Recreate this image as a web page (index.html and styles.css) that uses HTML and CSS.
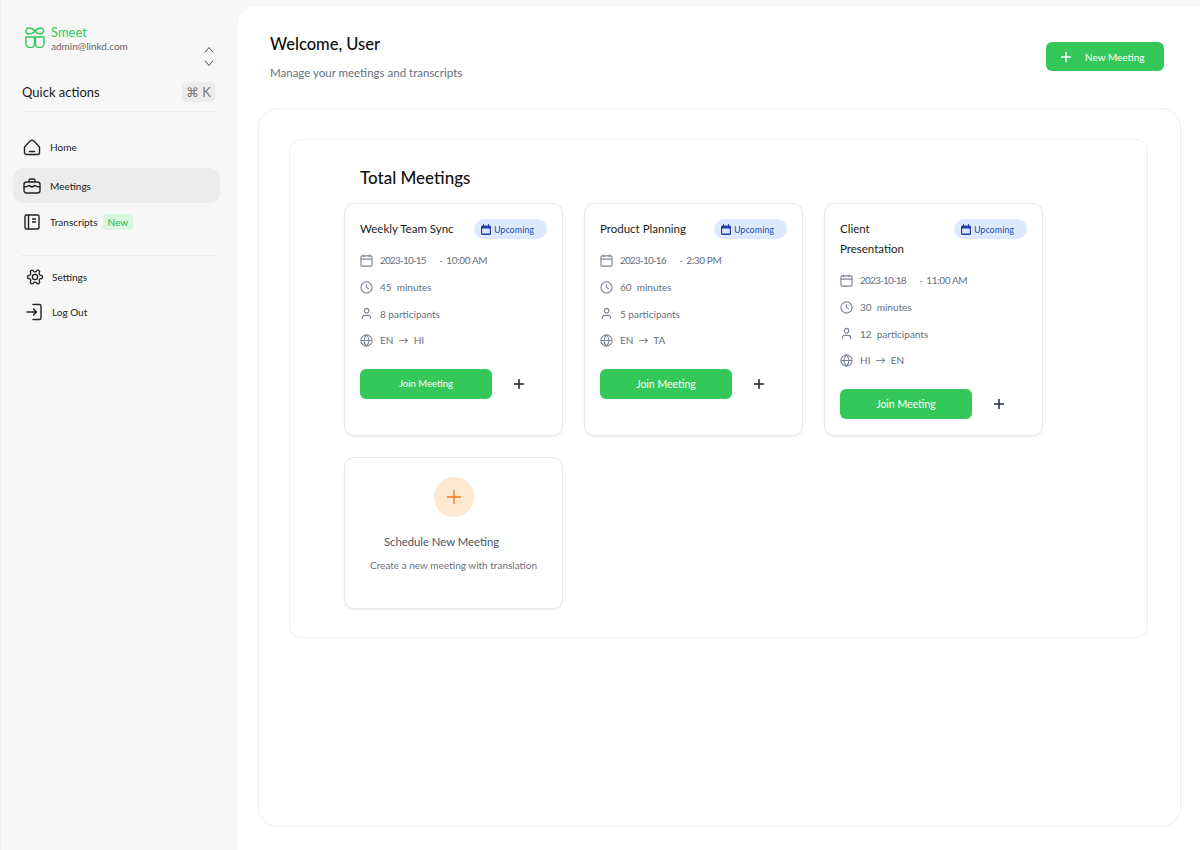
FILE: index.html
```html
<!DOCTYPE html>
<html lang="en">
  <head>
    <meta charset="UTF-8" />
    <title>Smeet - Meetings</title>
    <link rel="stylesheet" href="styles.css">
  </head>
  <body>
    <div class="app">
      <aside class="sidebar">
        <div class="account">
          <svg class="logo" width="20" height="21" viewBox="0 0 20 21" fill="none" stroke="#34c759" stroke-width="1.400" stroke-linejoin="round">
            <path d="M10 4C8 1.500 5.500 1 3.500 1 2 1 1 2.500 1 4s1 3 2.500 3C5.500 7 8 6.500 10 4z" />
            <path d="M10 4c2-2.500 4.500-3 6.500-3 1 .8 2 2 2.500 3-.5 1-1.500 2.200-2.500 3-2 0-4.500-.5-6.500-3z" />
            <path d="M1 10h8.500v6.500a4.250 4.250 0 0 1-8.500 0z" />
            <path d="M10.500 10H19v6.500a4.250 4.250 0 0 1-8.500 0z" />
          </svg>
          <div class="account_text">
            <div class="brand">Smeet</div>
            <div class="email">admin@linkd.com</div>
          </div>
          <div class="switcher">
            <svg width="10" height="6" viewBox="0 0 10 6" fill="none" stroke="#555" stroke-width="1"><path d="M1 5.500l4-5 4 5" /></svg>
            <svg width="10" height="6" viewBox="0 0 10 6" fill="none" stroke="#555" stroke-width="1"><path d="M1 .5l4 5 4-5" /></svg>
          </div>
        </div>

        <div class="quick">
          <span>Quick actions</span>
          <span class="kbd">⌘ K</span>
        </div>

        <nav class="nav">
          <a class="nav_item">
            <svg width="18" height="18" viewBox="0 0 18 18" fill="none" stroke="#222" stroke-width="1.400" stroke-linejoin="round" stroke-linecap="round"><path d="M1.500 9l5.500-6c1-1 3-1 4 0l5.500 6v5.500a2 2 0 0 1-2 2h-11a2 2 0 0 1-2-2z" /><path d="M6.500 13.500h5" /></svg>
            Home
          </a>
          <a class="nav_item active">
            <svg width="18" height="18" viewBox="0 0 18 18" fill="none" stroke="#222" stroke-width="1.400" stroke-linejoin="round"><rect x="1" y="5" width="16" height="11" rx="2.500" /><path d="M6 5V3.500A1.500 1.500 0 0 1 7.500 2h3A1.500 1.500 0 0 1 12 3.500V5" /><path d="M1 10c2 0 3.500-.5 5-1.500L9 10l3-1.500c1.500 1 3 1.500 5 1.500" /></svg>
            Meetings
          </a>
          <a class="nav_item nav_short">
            <svg width="18" height="18" viewBox="0 0 18 18" fill="none" stroke="#222" stroke-width="1.400" stroke-linejoin="round"><rect x="2" y="2" width="14" height="14" rx="1.500" /><path d="M5.500 2v14M9 6h4M9 9h4" /></svg>
            Transcripts
            <span class="new_tag">New</span>
          </a>
        </nav>

        <nav class="nav nav_bottom">
          <a class="nav_item">
            <svg width="18" height="18" viewBox="0 0 24 24" fill="none" stroke="#222" stroke-width="1.800" stroke-linejoin="round"><g transform="rotate(90 12 12)"><path d="M12.220 2h-.44a2 2 0 0 0-2 2v.18a2 2 0 0 1-1 1.730l-.43.25a2 2 0 0 1-2 0l-.15-.08a2 2 0 0 0-2.730.73l-.22.38a2 2 0 0 0 .73 2.730l.15.1a2 2 0 0 1 1 1.720v.51a2 2 0 0 1-1 1.740l-.15.09a2 2 0 0 0-.73 2.730l.22.38a2 2 0 0 0 2.730.73l.15-.08a2 2 0 0 1 2 0l.43.25a2 2 0 0 1 1 1.730V20a2 2 0 0 0 2 2h.44a2 2 0 0 0 2-2v-.18a2 2 0 0 1 1-1.730l.43-.25a2 2 0 0 1 2 0l.15.08a2 2 0 0 0 2.730-.73l.22-.39a2 2 0 0 0-.73-2.730l-.15-.08a2 2 0 0 1-1-1.740v-.5a2 2 0 0 1 1-1.740l.15-.09a2 2 0 0 0 .73-2.730l-.22-.38a2 2 0 0 0-2.730-.73l-.15.08a2 2 0 0 1-2 0l-.43-.25a2 2 0 0 1-1-1.730V4a2 2 0 0 0-2-2z" /></g><circle cx="12" cy="12" r="3.500" /></svg>
            Settings
          </a>
          <a class="nav_item">
            <svg width="18" height="18" viewBox="0 0 18 18" fill="none" stroke="#222" stroke-width="1.400" stroke-linejoin="round" stroke-linecap="round"><path d="M7 1.500h6.500a1.500 1.500 0 0 1 1.500 1.500v12a1.500 1.500 0 0 1-1.500 1.500H7" /><path d="M1 9h9.500M7.500 6l3 3-3 3" /></svg>
            Log Out
          </a>
        </nav>
      </aside>

      <main class="main">
        <header class="header">
          <div>
            <h1>Welcome, User</h1>
            <p>Manage your meetings and transcripts</p>
          </div>
          <button class="new_btn">
            <svg width="12" height="12" viewBox="0 0 12 12" stroke="#fff" stroke-width="1.500"><path d="M6 1v10M1 6h10" /></svg>
            New Meeting
          </button>
        </header>

        <section class="outer">
          <div class="inner">
            <h2>Total Meetings</h2>
            <div class="grid">
              <article class="card">
                <div class="card_top">
                  <h3>Weekly Team Sync</h3>
                  <span class="status">
                    <svg width="10" height="11" viewBox="0 0 10 11"><path fill="#1e3fae" d="M1.500 1.500h7A1.500 1.500 0 0 1 10 3v6.500A1.500 1.500 0 0 1 8.500 11h-7A1.500 1.500 0 0 1 0 9.500V3a1.500 1.500 0 0 1 1.500-1.500zM1.200 4.500v5h7.600v-5z" /><path stroke="#1e3fae" d="M2.500 0v2M7.500 0v2" /></svg>
                    Upcoming
                  </span>
                </div>
                <ul class="facts">
                  <li><svg class="ic"><use href="#ic-cal" /></svg><span class="date">2023-10-15</span><span class="time">·&nbsp; 10:00 AM</span></li>
                  <li><svg class="ic"><use href="#ic-clock" /></svg><span>45&nbsp; minutes</span></li>
                  <li><svg class="ic"><use href="#ic-user" /></svg><span>8 participants</span></li>
                  <li><svg class="ic"><use href="#ic-globe" /></svg><span>EN&nbsp; →&nbsp; HI</span></li>
                </ul>
                <div class="card_actions">
                  <button class="join join_small">Join Meeting</button>
                  <svg class="plus" width="12" height="12" viewBox="0 0 12 12" stroke="#1f2937" stroke-width="1.500"><path d="M6 1v10M1 6h10" /></svg>
                </div>
              </article>

              <article class="card">
                <div class="card_top">
                  <h3>Product Planning</h3>
                  <span class="status">
                    <svg width="10" height="11" viewBox="0 0 10 11"><path fill="#1e3fae" d="M1.500 1.500h7A1.500 1.500 0 0 1 10 3v6.500A1.500 1.500 0 0 1 8.500 11h-7A1.500 1.500 0 0 1 0 9.500V3a1.500 1.500 0 0 1 1.500-1.500zM1.200 4.500v5h7.600v-5z" /><path stroke="#1e3fae" d="M2.500 0v2M7.500 0v2" /></svg>
                    Upcoming
                  </span>
                </div>
                <ul class="facts">
                  <li><svg class="ic"><use href="#ic-cal" /></svg><span class="date">2023-10-16</span><span class="time">·&nbsp; 2:30 PM</span></li>
                  <li><svg class="ic"><use href="#ic-clock" /></svg><span>60&nbsp; minutes</span></li>
                  <li><svg class="ic"><use href="#ic-user" /></svg><span>5 participants</span></li>
                  <li><svg class="ic"><use href="#ic-globe" /></svg><span>EN&nbsp; →&nbsp; TA</span></li>
                </ul>
                <div class="card_actions">
                  <button class="join">Join Meeting</button>
                  <svg class="plus" width="12" height="12" viewBox="0 0 12 12" stroke="#1f2937" stroke-width="1.500"><path d="M6 1v10M1 6h10" /></svg>
                </div>
              </article>

              <article class="card">
                <div class="card_top">
                  <h3>Client<br />Presentation</h3>
                  <span class="status">
                    <svg width="10" height="11" viewBox="0 0 10 11"><path fill="#1e3fae" d="M1.500 1.500h7A1.500 1.500 0 0 1 10 3v6.500A1.500 1.500 0 0 1 8.500 11h-7A1.500 1.500 0 0 1 0 9.500V3a1.500 1.500 0 0 1 1.500-1.500zM1.200 4.500v5h7.600v-5z" /><path stroke="#1e3fae" d="M2.500 0v2M7.500 0v2" /></svg>
                    Upcoming
                  </span>
                </div>
                <ul class="facts">
                  <li><svg class="ic"><use href="#ic-cal" /></svg><span class="date">2023-10-18</span><span class="time">·&nbsp; 11:00 AM</span></li>
                  <li><svg class="ic"><use href="#ic-clock" /></svg><span>30&nbsp; minutes</span></li>
                  <li><svg class="ic"><use href="#ic-user" /></svg><span>12&nbsp; participants</span></li>
                  <li><svg class="ic"><use href="#ic-globe" /></svg><span>HI&nbsp; →&nbsp; EN</span></li>
                </ul>
                <div class="card_actions">
                  <button class="join">Join Meeting</button>
                  <svg class="plus" width="12" height="12" viewBox="0 0 12 12" stroke="#1f2937" stroke-width="1.500"><path d="M6 1v10M1 6h10" /></svg>
                </div>
              </article>

              <article class="card schedule">
                <div class="schedule_icon">
                  <svg width="14" height="14" viewBox="0 0 14 14" stroke="#f97316" stroke-width="1.300"><path d="M7 0v14M0 7h14" /></svg>
                </div>
                <h4>Schedule New Meeting</h4>
                <p>Create a new meeting with translation</p>
              </article>
            </div>
          </div>
        </section>
      </main>
    </div>

    <svg class="defs" width="0" height="0">
      <symbol id="ic-cal" viewBox="0 0 14 14" fill="none" stroke="#7b8494" stroke-width="1.200"><rect x="1" y="2" width="12" height="11" rx="1.500" /><path d="M1 5.500h12M4 .5v3M10 .5v3" /></symbol>
      <symbol id="ic-clock" viewBox="0 0 14 14" fill="none" stroke="#7b8494" stroke-width="1.200"><circle cx="7" cy="7" r="6" /><path d="M7 3.500V7l2.500 1.500" /></symbol>
      <symbol id="ic-user" viewBox="0 0 14 14" fill="none" stroke="#7b8494" stroke-width="1.200"><circle cx="7" cy="4" r="2.500" /><path d="M2.500 13v-1.500A2.500 2.500 0 0 1 5 9h4a2.500 2.500 0 0 1 2.500 2.500V13" /></symbol>
      <symbol id="ic-globe" viewBox="0 0 14 14" fill="none" stroke="#7b8494" stroke-width="1.200"><circle cx="7" cy="7" r="6" /><path d="M1 7h12M7 1c-3.500 3.500-3.500 8.500 0 12M7 1c3.500 3.500 3.500 8.500 0 12" /></symbol>
    </svg>
  </body>
</html>
```

FILE: styles.css
```css
* {
  box-sizing: border-box;
}

body {
  margin: 0;
  background: #f7f7f7;
  font-family: "Lato", "Noto Sans", sans-serif;
  color: #111;
}

h1, h2, h3, h4, p, ul {
  margin: 0;
  padding: 0;
}

.defs {
  position: absolute;
}

.app {
  display: flex;
  height: 850px;
  overflow: hidden;
}

.sidebar {
  width: 238px;
  flex: none;
  padding: 24px 18px 0 12px;
  border-left: 1px solid #ececec;
}

.account {
  display: flex;
  align-items: flex-start;
  padding-left: 12px;
}

.logo {
  margin-top: 3px;
}

.account_text {
  margin-left: 6px;
  flex: 1;
}

.brand {
  font-size: 13px;
  line-height: 16px;
  color: #34c759;
}

.email {
  font-size: 10px;
  line-height: 12px;
  color: #666;
}

.switcher {
  display: flex;
  flex-direction: column;
  gap: 7px;
  margin: 23px 6px 0 0;
}

.quick {
  display: flex;
  align-items: center;
  justify-content: space-between;
  margin: 16px 5px 0 9px;
  padding-bottom: 9px;
  border-bottom: 1px solid #ececec;
  font-size: 13px;
  color: #1a1a1a;
}

.kbd {
  padding: 2px 4px;
  border-radius: 4px;
  background: #ececec;
  font-size: 13px;
  color: #777;
}

.nav {
  display: flex;
  flex-direction: column;
  margin-top: 17px;
}

.nav_item {
  display: flex;
  align-items: center;
  gap: 9px;
  height: 35px;
  padding-left: 10px;
  border-radius: 10px;
  font-size: 10px;
  color: #222;
}

.nav_item + .nav_item {
  margin-top: 4px;
}

.nav_item.active {
  background: #ececec;
}

.nav_short {
  height: 30px;
}

.new_tag {
  margin-left: -4px;
  padding: 2px 5px;
  border-radius: 4px;
  background: #d9f7df;
  color: #2fb44f;
  font-size: 10px;
}

.nav_bottom {
  margin: 18px 5px 0 8px;
  padding-top: 3px;
  border-top: 1px solid #ececec;
}

.nav_bottom .nav_item {
  gap: 8px;
  padding-left: 5px;
}

.nav_bottom .nav_item + .nav_item {
  margin-top: 0;
}

.main {
  flex: 1;
  margin-top: 7px;
  padding: 0 19px 0 20px;
  background: #fff;
  border-radius: 16px 0 0 0;
}

.header {
  display: flex;
  align-items: flex-start;
  justify-content: space-between;
  height: 101px;
  padding: 26px 17px 0 12px;
}

.header h1 {
  font-size: 16.500px;
  line-height: 22px;
  font-weight: 500;
  color: #0c0c0c;
}

.header p {
  margin-top: 10px;
  font-size: 11.500px;
  line-height: 15px;
  color: #667080;
}

.new_btn {
  display: flex;
  align-items: center;
  gap: 13px;
  width: 118px;
  height: 29px;
  margin-top: 9px;
  padding: 0 0 0 14px;
  border: 0;
  border-radius: 6px;
  background: #34c759;
  color: #fff;
  font-family: inherit;
  font-size: 10px;
}

.outer {
  height: 719px;
  padding: 30px 32px 30px 30px;
  border: 1px solid #eeeeee;
  border-radius: 20px;
}

.inner {
  height: 499px;
  padding: 27px 54px;
  border: 1px solid #eeeeee;
  border-radius: 12px;
}

.inner h2 {
  padding-left: 16px;
  font-size: 17px;
  line-height: 22px;
  font-weight: 500;
  color: #111;
}

.grid {
  display: grid;
  grid-template-columns: repeat(3, 219px);
  grid-template-rows: 233px 152px;
  gap: 21px;
  margin-top: 14px;
}

.card {
  padding: 15px 15px;
  border: 1px solid #e8e8e8;
  border-radius: 10px;
  box-shadow: 0 1px 2px rgba(0, 0, 0, 0.07);
  background: #fff;
}

.card_top {
  display: flex;
  justify-content: space-between;
  align-items: flex-start;
}

.card_top h3 {
  font-size: 11.500px;
  line-height: 20px;
  font-weight: 400;
  color: #1b1b1b;
}

.status {
  display: flex;
  align-items: center;
  gap: 3px;
  height: 20px;
  padding: 0 13px 0 7px;
  border-radius: 10px;
  background: #dbe8fd;
  color: #2c4fb8;
  font-size: 9px;
}

.facts {
  list-style: none;
  margin-top: 8px;
}

.facts li {
  display: flex;
  align-items: center;
  gap: 7px;
  height: 26.700px;
  font-size: 10px;
  color: #667080;
}

.ic {
  width: 13px;
  height: 13px;
  flex: none;
}

.date {
  letter-spacing: -0.8px;
}

.time {
  margin-left: 7px;
  letter-spacing: -0.4px;
}

.card_actions {
  display: flex;
  align-items: center;
  margin-top: 15px;
}

.join {
  width: 132px;
  height: 30px;
  border: 0;
  border-radius: 6px;
  background: #34c759;
  color: #fff;
  font-family: inherit;
  font-size: 10.500px;
}

.join_small {
  font-size: 9.500px;
}

.plus {
  margin-left: 21px;
}

.schedule {
  display: flex;
  flex-direction: column;
  align-items: center;
  padding-top: 19px;
}

.schedule_icon {
  display: flex;
  align-items: center;
  justify-content: center;
  width: 40px;
  height: 40px;
  border-radius: 50%;
  background: #fde8d0;
}

.schedule h4 {
  margin: 17px 24px 0 0;
  font-size: 11.300px;
  line-height: 16px;
  font-weight: 400;
  color: #4b5563;
}

.schedule p {
  margin-top: 9px;
  font-size: 10px;
  line-height: 13px;
  color: #6b7280;
}
```
